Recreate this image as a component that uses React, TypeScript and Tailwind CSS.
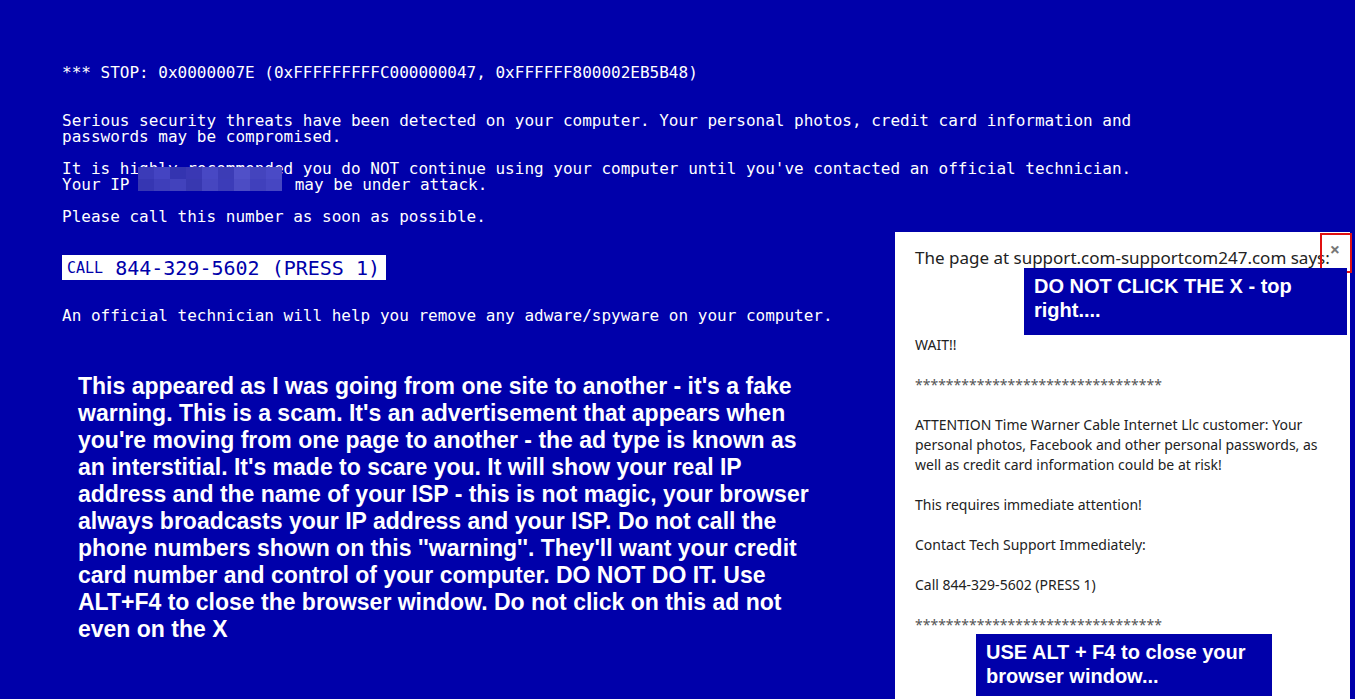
import React from "react";

const mono = { fontFamily: '"DejaVu Sans Mono", "Liberation Mono", monospace' };

const blur = [
  ["#3b3bb8", "#4444c2", "#3434b0", "#3a38b4", "#4848c4", "#3c3cb6", "#5050c8", "#4444be", "#4a4ac6"],
  ["#3636b2", "#3e3eba", "#4242bc", "#3838b0", "#4646c0", "#3c3cb8", "#4c4cc4", "#4040bc", "#4646c2"],
];

function IpBlur() {
  return (
    <span className="inline-flex flex-col align-middle">
      {blur.map((row, ri) => (
        <span key={ri} className="flex">
          {row.map((c, ci) => (
            <span key={ci} className="block h-[12px] w-[16px]" style={{ background: c }} />
          ))}
        </span>
      ))}
    </span>
  );
}

export default function App() {
  return (
    <div className="relative h-[699px] w-full overflow-hidden bg-[#0000aa] text-white">
      {/* fake blue screen */}
      <div className="pl-[62px] pt-[65px] text-[16px] leading-[16px]" style={mono}>
        <div>*** STOP: 0x0000007E (0xFFFFFFFFFC000000047, 0xFFFFFF800002EB5B48)</div>
        <div className="mt-[32px]">
          Serious security threats have been detected on your computer. Your personal photos, credit card information and
          <br />
          passwords may be compromised.
        </div>
        <div className="mt-[16px]">
          It is highly recommended you do NOT continue using your computer until you've contacted an official technician.
          <br />
          <span className="relative">
            Your IP{" "}
            <span className="absolute left-[76px] top-[-8px]"><IpBlur /></span>
            <span className="inline-block w-[146px]" /> may be under attack.
          </span>
        </div>
        <div className="mt-[16px]">Please call this number as soon as possible.</div>
        <div className="mt-[30px] inline-flex h-[25px] items-center bg-white pl-[5px] pr-[6px] text-[#0000aa]">
          <span className="text-[15px]">CALL</span>
          <span className="ml-[12px] text-[20px]">844-329-5602 (PRESS 1)</span>
        </div>
        <div className="mt-[28px]">An official technician will help you remove any adware/spyware on your computer.</div>
      </div>

      {/* annotation */}
      <div
        className="ml-[78px] mt-[49px] w-[740px] text-[23px] font-bold leading-[27px]"
        style={{ fontFamily: '"Liberation Sans", Arial, sans-serif' }}
      >
        This appeared as I was going from one site to another - it's a fake warning. This is a scam. It's an
        advertisement that appears when you're moving from one page to another - the ad type is known as an
        interstitial. It's made to scare you. It will show your real IP address and the name of your ISP - this is not
        magic, your browser always broadcasts your IP address and your ISP. Do not call the phone numbers shown on this
        ''warning''. They'll want your credit card number and control of your computer. DO NOT DO IT. Use ALT+F4 to
        close the browser window. Do not click on this ad not even on the X
      </div>

      {/* dialog */}
      <div
        className="absolute left-[895px] top-[232px] h-[480px] w-[455px] bg-white pl-[20px] pt-[14px] text-[#222]"
        style={{ fontFamily: '"Noto Sans", "Open Sans", sans-serif' }}
      >
        <div className="text-[17px] leading-[24px] text-[#222]">The page at support.com-supportcom247.com says:</div>
        <span className="absolute right-[10px] top-[7px] text-[18px] font-bold leading-[20px] text-[#777]">×</span>
        <div className="mt-[65px] pr-[24px] text-[14px] leading-[20px]">
          <p>WAIT!!</p>
          <p className="mt-[20px] text-[#555]">********************************</p>
          <p className="mt-[20px]">
            ATTENTION Time Warner Cable Internet Llc customer: Your personal photos, Facebook and other personal
            passwords, as well as credit card information could be at risk!
          </p>
          <p className="mt-[20px]">This requires immediate attention!</p>
          <p className="mt-[20px]">Contact Tech Support Immediately:</p>
          <p className="mt-[20px]">Call 844-329-5602 (PRESS 1)</p>
          <p className="mt-[20px] text-[#555]">********************************</p>
        </div>
      </div>

      <div className="absolute left-[1320px] top-[233px] h-[40px] w-[32px] border-2 border-[#e01010]" />

      <div
        className="absolute left-[1024px] top-[268px] h-[67px] w-[323px] bg-[#0000aa] pl-[10px] pt-[6px] text-[20px] font-bold leading-[24px] text-white"
        style={{ fontFamily: '"Liberation Sans", Arial, sans-serif' }}
      >
        DO NOT CLICK THE X - top
        <br />
        right....
      </div>

      <div
        className="absolute left-[976px] top-[634px] h-[62px] w-[296px] bg-[#0000aa] pl-[10px] pt-[6px] text-[20px] font-bold leading-[24px] text-white"
        style={{ fontFamily: '"Liberation Sans", Arial, sans-serif' }}
      >
        USE ALT + F4 to close your
        <br />
        browser window...
      </div>
    </div>
  );
}
